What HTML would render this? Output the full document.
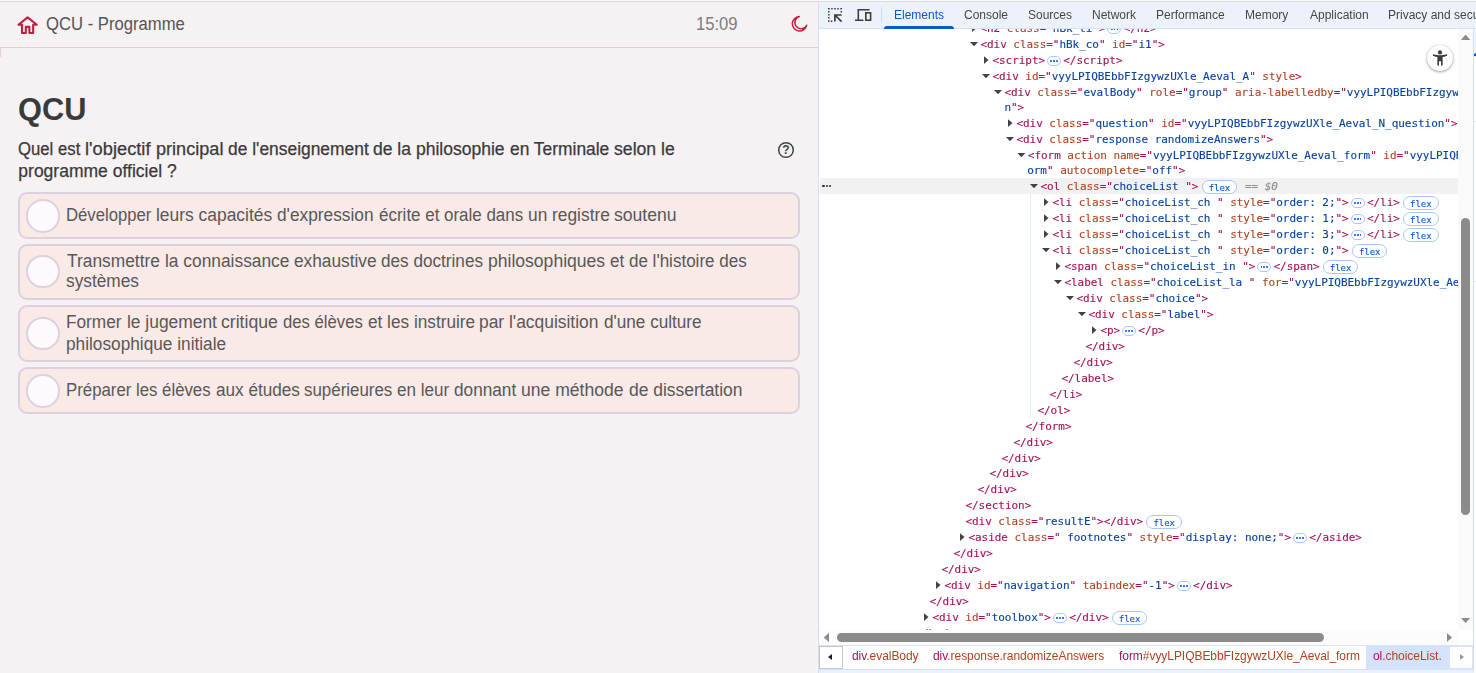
<!DOCTYPE html>
<html lang="fr">
<head>
<meta charset="utf-8">
<title>QCU - Programme</title>
<style>
*{box-sizing:border-box;margin:0;padding:0}
html,body{width:1476px;height:673px;overflow:hidden;background:#f6f1f3}
.sx{transform-origin:0 0}
.ln{display:block;transform-origin:0 0}
body{position:relative;font-family:"Liberation Sans",sans-serif;color:#3b3b3b}
#topline{position:absolute;left:0;top:0;width:1476px;height:2px;background:linear-gradient(#fbfbfb 0,#fbfbfb 1px,#dadada 1px,#dadada 2px);z-index:50}
/* ---------- left page ---------- */
#page{position:absolute;left:0;top:0;width:818px;height:673px;background:#f6f1f3;overflow:hidden}
#hdr{position:absolute;left:0;top:0;width:818px;height:48px;border-bottom:1px solid #dfd0dc}
#stub{position:absolute;left:0;top:48px;width:1px;height:9px;background:#dfd0dc}
#home{position:absolute;left:14.9px;top:13.2px;width:25.2px;height:25.2px}
#ttl{position:absolute;left:46px;top:12px;font-size:18px;line-height:24px;color:#555;white-space:nowrap}
#clock{position:absolute;left:696px;top:12px;font-size:18px;line-height:24px;color:#7d7d7d;white-space:nowrap}
#moon{position:absolute;left:786px;top:12px;width:26px;height:26px}
h1{position:absolute;left:18px;top:90px;font-size:32px;line-height:38px;font-weight:bold;color:#3a3a3a;white-space:nowrap}
#q{position:absolute;left:18.3px;top:137.5px;font-size:17.5px;line-height:22px;color:#3a3a3a;white-space:nowrap;letter-spacing:.01px;-webkit-text-stroke:.25px #3a3a3a}
#help{position:absolute;left:777px;top:141px;width:18px;height:18px}
.opt{position:absolute;left:18px;width:782px;border:2px solid #ddd1de;border-radius:9px;background:#f9e9e7}
.opt .rad{position:absolute;left:6.2px;width:33.6px;height:33.6px;margin-top:.2px;border-radius:50%;border:2px solid #ddd1de;background:#fdf9fc}
.lw{position:absolute;left:0;display:block;white-space:pre}
.lw .w{position:absolute;top:0;transform-origin:0 0;white-space:pre}
#q .l2{position:absolute;left:0;top:22px}
.opt .lw{font-size:18px;line-height:20px;color:#585858}
.opt .ln{position:absolute;left:46.2px;font-size:18px;line-height:20px;color:#585858;white-space:nowrap}
/* ---------- devtools ---------- */
#dt{position:absolute;left:818px;top:0;width:658px;height:673px;background:#fff;overflow:hidden}
#dt .abs,#dt>div,#tb>*,#bc>*{position:absolute}
#lb{left:0;top:0;width:1px;height:673px;background:#cfdff7;z-index:40}
#tb{left:1px;top:2px;width:657px;height:27px;background:#edf2fa;border-bottom:1px solid #d3e3fd;z-index:10}
#tb span{will-change:transform;top:6px;font-size:12px;line-height:15px;color:#454746;white-space:nowrap}
#tb span.on{color:#0b57d0}
#tb .ul{left:65px;top:23.5px;width:70px;height:3px;background:#0b57d0;border-radius:3px 3px 0 0}
#tb .sep{left:62px;top:5px;width:1px;height:16px;background:#cbdcf6}
#tb svg{left:0;top:0}
#code{left:1px;top:29px;width:639px;height:601px;overflow:hidden;background:#fff}
#rows{will-change:transform;position:absolute;left:-819px;top:-29px;width:1500px;height:673px;font-family:"DejaVu Sans Mono","Liberation Mono",monospace;font-size:11px;letter-spacing:-0.04px}
.row{position:absolute;left:819px;width:700px;height:16px;line-height:16px;white-space:pre}
.row.sel{background:linear-gradient(90deg,#fff 1px,#f1f1f1 1px)}
.code{position:absolute;top:1px;white-space:pre;color:#a3125b;-webkit-text-stroke:.12px}
.t{color:#a3125b}
.a{color:#ae4420}
.v{color:#0842a0}
.eq{color:#8f8f8f;font-style:italic}
.ad,.ar{position:absolute;background:#434343}
.ad{top:6px;width:8px;height:4.2px;clip-path:polygon(0 0,100% 0,50% 100%)}
.ar{top:4.2px;width:4.5px;height:7.8px;clip-path:polygon(0 0,100% 50%,0 100%)}
.ell{display:inline-block;vertical-align:top;position:relative;width:14px;height:9.8px;margin:3.1px 2.3px 0 1.9px;border:1px solid #a8c7fa;border-radius:5px;background:#fff}
.ell i,.gut i{position:absolute;width:1.8px;height:1.8px;border-radius:50%;background:#0b57d0;top:3.1px}
.ell i:nth-child(1){left:2.3px}.ell i:nth-child(2){left:5.2px}.ell i:nth-child(3){left:8.1px}
.gut{position:absolute;left:3.3px;top:6.7px;width:10px;height:3px}
.gut i{background:#2e2e2e;top:0;width:2.3px;height:2.3px}
.gut i:nth-child(1){left:0}.gut i:nth-child(2){left:3.4px}.gut i:nth-child(3){left:6.8px}
.flex{display:inline-block;vertical-align:top;height:13.8px;line-height:14.2px;margin:1.4px 1.2px 0 3.2px;padding:0 6px;border:1px solid #a8c7fa;border-radius:7px;background:#fff;color:#0b57d0;font-size:9px}
#guide{left:212px;top:194px;width:1px;height:224px;background:#e2ecfc;z-index:5}
#vs{left:640px;top:29px;width:15px;height:616px;background:#fafafa}
#vs .th{position:absolute;left:3.3px;top:189px;width:8.5px;height:297px;border-radius:4.5px;background:#8b8b8b}
#vs .up,#vs .dn,#hs .lf,#hs .rt{position:absolute;background:#8b8b8b}
#vs .up{left:2.9px;top:5.6px;width:9.4px;height:5.3px;clip-path:polygon(50% 0,100% 100%,0 100%)}
#vs .dn{left:2.9px;top:588.8px;width:9.4px;height:5.3px;clip-path:polygon(0 0,100% 0,50% 100%)}
#hs{left:1px;top:630px;width:639px;height:15px;background:#fcfcfc}
#hs .th{position:absolute;left:18px;top:3.2px;width:487px;height:8.6px;border-radius:4.5px;background:#8b8b8b}
#hs .lf{left:4.8px;top:2.8px;width:5.4px;height:9.4px;clip-path:polygon(100% 0,100% 100%,0 50%)}
#hs .rt{left:627.6px;top:2.8px;width:5.4px;height:9.4px;clip-path:polygon(0 0,100% 50%,0 100%)}
#corner{left:640px;top:630px;width:15px;height:15px;background:#fff}
#rb{left:655px;top:29px;width:1px;height:644px;background:#cfdff7}
#rp{left:656px;top:29px;width:2px;height:644px;background:#fff}
#rp i{position:absolute;left:0;width:2px;display:block}
#bc{left:1px;top:645px;width:654px;height:25px;background:#fff;border-top:1px solid #d3e3fd;border-bottom:1px solid #d3e3fd;font-size:12px;line-height:20px;white-space:nowrap}
#bc .c{will-change:transform;top:0;height:23px;padding:0 7px;color:#ae4420;letter-spacing:-0.05px}
#bc .c b{font-weight:normal;color:#a3125b}
#bc .onbg{top:0;height:23px;background:#d3e3fd}
#bc .btn{top:0;width:24px;height:23px;background:#fff;border:1px solid #c4c7c5}
#bc .btn.dis{border-color:#e1e6ee}
#bc .btn i{position:absolute;width:0;height:0;top:6.8px;border-top:3px solid transparent;border-bottom:3px solid transparent}
#foot{left:0;top:670px;width:656px;height:3px;background:#eaf1fb}
#a11y{left:609px;top:44.5px;width:26px;height:26px;border-radius:50%;background:#fff;box-shadow:0 1px 3px rgba(0,0,0,.35),0 0 1px rgba(0,0,0,.25);z-index:20}
#a11y svg{position:absolute;left:4px;top:4px;width:18px;height:18px}
</style>
</head>
<body>
<div id="page">
  <div id="hdr"></div><div id="stub"></div>
  <svg id="home" viewBox="0 0 24 24"><path fill="none" stroke="#c21f41" stroke-width="2" stroke-linejoin="round" d="M12 4.2L3.3 11.2H6.7V19H10.3V13.2H13.7V19H17.3V11.2H20.7Z"/></svg>
  <div id="ttl" class="sx" style="transform:scaleX(.925)">QCU - Programme</div>
  <div id="clock" class="sx" style="transform:scaleX(.923)">15:09</div>
  <svg id="moon" viewBox="786 12 26 26"><path fill="none" stroke="#c21f41" stroke-width="1.5" stroke-linejoin="round" d="M799.3 16.6A7.25 7.25 0 1 0 806.7 25.2A6.2 6.2 0 1 1 799.3 16.6z"/></svg>
  <h1 class="sx" style="transform:scaleX(.961)">QCU</h1>
  <div id="q"><span class="lw" style="top:0"><span class="w" style="left:0.20px;transform:scaleX(0.9545)">Quel est </span><span class="w" style="left:66.96px;transform:scaleX(1.0438)">l'objectif </span><span class="w" style="left:137.47px;transform:scaleX(1.0328)">principal </span><span class="w" style="left:209.80px;transform:scaleX(0.9935)">de l'enseignement </span><span class="w" style="left:355.20px;transform:scaleX(1.0006)">de la philosophie </span><span class="w" style="left:491.50px;transform:scaleX(0.9928)">en Terminale </span><span class="w" style="left:595.80px;transform:scaleX(1.0069)">selon le</span></span><span class="l2">programme officiel ?</span></div>
  <svg id="help" viewBox="0 0 18 18"><circle cx="9" cy="9" r="7.3" fill="none" stroke="#444" stroke-width="1.5"/><text x="9" y="13.3" text-anchor="middle" font-family="Liberation Sans, sans-serif" font-weight="bold" font-size="12" fill="#444">?</text></svg>
  <div class="opt" style="top:192px;height:47px"><div class="rad" style="top:5px"></div><span class="lw" style="top:10.86px"><span class="w" style="left:46.27px;transform:scaleX(0.9273)">Développer </span><span class="w" style="left:136.23px;transform:scaleX(0.9673)">leurs capacités </span><span class="w" style="left:257.20px;transform:scaleX(0.9602)">d'expression </span><span class="w" style="left:358.50px;transform:scaleX(0.9445)">écrite et </span><span class="w" style="left:423.70px;transform:scaleX(0.9416)">orale dans </span><span class="w" style="left:507.54px;transform:scaleX(0.9624)">un registre </span><span class="w" style="left:594.20px;transform:scaleX(0.9771)">soutenu</span></span></div>
  <div class="opt" style="top:244px;height:56px"><div class="rad" style="top:8.6px"></div><span class="lw" style="top:4.76px"><span class="w" style="left:46.80px;transform:scaleX(0.9643)">Transmettre </span><span class="w" style="left:144.54px;transform:scaleX(0.964)">la connaissance </span><span class="w" style="left:273.80px;transform:scaleX(0.9599)">exhaustive </span><span class="w" style="left:361.20px;transform:scaleX(0.9526)">des doctrines </span><span class="w" style="left:467.92px;transform:scaleX(0.9751)">philosophiques </span><span class="w" style="left:589.90px;transform:scaleX(0.9459)">et de l'histoire des</span></span><span class="ln" style="top:25.46px;transform:scaleX(0.9605)">systèmes</span></div>
  <div class="opt" style="top:305px;height:57px"><div class="rad" style="top:9.6px"></div><span class="lw" style="top:5.06px"><span class="w" style="left:46.24px;transform:scaleX(0.9571)">Former </span><span class="w" style="left:106.53px;transform:scaleX(0.9664)">le jugement </span><span class="w" style="left:201.30px;transform:scaleX(0.979)">critique </span><span class="w" style="left:263.00px;transform:scaleX(0.928)">des élèves </span><span class="w" style="left:347.50px;transform:scaleX(0.9556)">et les instruire </span><span class="w" style="left:459.33px;transform:scaleX(0.967)">par l'acquisition </span><span class="w" style="left:583.60px;transform:scaleX(0.9522)">d'une culture</span></span><span class="ln" style="top:26.76px;transform:scaleX(0.958)">philosophique initiale</span></div>
  <div class="opt" style="top:367px;height:47px"><div class="rad" style="top:5px"></div><span class="lw" style="top:10.96px"><span class="w" style="left:46.27px;transform:scaleX(0.9329)">Préparer </span><span class="w" style="left:116.27px;transform:scaleX(0.9317)">les élèves </span><span class="w" style="left:195.50px;transform:scaleX(0.9531)">aux études </span><span class="w" style="left:284.20px;transform:scaleX(0.9389)">supérieures </span><span class="w" style="left:377.20px;transform:scaleX(0.9494)">en leur </span><span class="w" style="left:434.20px;transform:scaleX(0.9554)">donnant </span><span class="w" style="left:501.12px;transform:scaleX(0.9754)">une méthode </span><span class="w" style="left:608.50px;transform:scaleX(0.9693)">de dissertation</span></span></div>
</div>
<div id="dt">
  <div id="lb"></div>
  <div id="tb">
    <svg width="70" height="27" viewBox="819 2 70 27">
      <g fill="none" stroke="#3c3c3c" stroke-width="1.5">
        <path d="M841.3 12.4V8.8H828.8V21.2H833" stroke-dasharray="1.5 1.55"/>
        <path d="M841.6 21.7L835.4 15.5M834.9 21.6V15H841.6" stroke-width="1.7"/>
        <path d="M869.5 9.8H858.3V20M855 20.3H863.4" stroke-width="1.6"/>
        <rect x="865.8" y="12.8" width="4.8" height="7.4" stroke-width="1.6"/>
      </g>
    </svg>
    <div class="sep"></div>
    <span class="on" style="left:75.2px">Elements</span>
    <span style="left:144.9px">Console</span>
    <span style="left:209.1px">Sources</span>
    <span style="left:273.2px">Network</span>
    <span style="left:337.4px">Performance</span>
    <span style="left:426.4px">Memory</span>
    <span style="left:491px">Application</span>
    <span style="left:569.3px">Privacy and security</span>
    <div class="ul"></div>
  </div>
  <div id="code"><div id="rows">
<div class="row " style="top:20.00px"><b class="ar" style="left:153.0px"></b><span class="code" style="left:161.4px"><span class="t">&lt;h2</span> <span class="a">class</span><span class="t">="</span><span class="v">hBk_ti</span><span class="t">"</span><span class="t">&gt;</span><span class="ell"><i></i><i></i><i></i></span><span class="t">&lt;/h2&gt;</span></span></div>
<div class="row " style="top:36.00px"><b class="ad" style="left:151.0px"></b><span class="code" style="left:161.4px"><span class="t">&lt;div</span> <span class="a">class</span><span class="t">="</span><span class="v">hBk_co</span><span class="t">"</span> <span class="a">id</span><span class="t">="</span><span class="v">i1</span><span class="t">"</span><span class="t">&gt;</span></span></div>
<div class="row " style="top:52.00px"><b class="ar" style="left:165.0px"></b><span class="code" style="left:173.4px"><span class="t">&lt;script&gt;</span><span class="ell"><i></i><i></i><i></i></span><span class="t">&lt;/script&gt;</span></span></div>
<div class="row " style="top:68.00px"><b class="ad" style="left:163.0px"></b><span class="code" style="left:173.4px"><span class="t">&lt;div</span> <span class="a">id</span><span class="t">="</span><span class="v">vyyLPIQBEbbFIzgywzUXle_Aeval_A</span><span class="t">"</span> <span class="a">style</span><span class="t">&gt;</span></span></div>
<div class="row " style="top:84.00px"><b class="ad" style="left:175.0px"></b><span class="code" style="left:185.4px"><span class="t">&lt;div</span> <span class="a">class</span><span class="t">="</span><span class="v">evalBody</span><span class="t">"</span> <span class="a">role</span><span class="t">="</span><span class="v">group</span><span class="t">"</span> <span class="a">aria-labelledby</span><span class="t">="</span><span class="v">vyyLPIQBEbbFIzgywzUXle_Aeval_N_questio</span><span class="t">"</span></span></div>
<div class="row " style="top:99.00px"><span class="code" style="left:185.4px"><span class="v">n</span><span class="t">"</span><span class="t">&gt;</span></span></div>
<div class="row " style="top:115.00px"><b class="ar" style="left:189.0px"></b><span class="code" style="left:197.4px"><span class="t">&lt;div</span> <span class="a">class</span><span class="t">="</span><span class="v">question</span><span class="t">"</span> <span class="a">id</span><span class="t">="</span><span class="v">vyyLPIQBEbbFIzgywzUXle_Aeval_N_question</span><span class="t">"</span><span class="t">&gt;</span></span></div>
<div class="row " style="top:131.00px"><b class="ad" style="left:187.0px"></b><span class="code" style="left:197.4px"><span class="t">&lt;div</span> <span class="a">class</span><span class="t">="</span><span class="v">response randomizeAnswers</span><span class="t">"</span><span class="t">&gt;</span></span></div>
<div class="row " style="top:147.00px"><b class="ad" style="left:198.4px"></b><span class="code" style="left:208.8px"><span class="t">&lt;form</span> <span class="a">action</span> <span class="a">name</span><span class="t">="</span><span class="v">vyyLPIQBEbbFIzgywzUXle_Aeval_form</span><span class="t">"</span> <span class="a">id</span><span class="t">="</span><span class="v">vyyLPIQBEbbFIzgywzUXle_Aeval_f</span></span></div>
<div class="row " style="top:162.00px"><span class="code" style="left:208.2px"><span class="v">orm</span><span class="t">"</span> <span class="a">autocomplete</span><span class="t">="</span><span class="v">off</span><span class="t">"</span><span class="t">&gt;</span></span></div>
<div class="row sel" style="top:178.00px"><span class="gut"><i></i><i></i><i></i></span><b class="ad" style="left:211.0px"></b><span class="code" style="left:221.4px"><span class="t">&lt;ol</span> <span class="a">class</span><span class="t">="</span><span class="v">choiceList </span><span class="t">"</span><span class="t">&gt;</span><span class="flex">flex</span><span class="eq"> == $0</span></span></div>
<div class="row " style="top:194.00px"><b class="ar" style="left:225.0px"></b><span class="code" style="left:233.4px"><span class="t">&lt;li</span> <span class="a">class</span><span class="t">="</span><span class="v">choiceList_ch </span><span class="t">"</span> <span class="a">style</span><span class="t">="</span><span class="v">order: 2;</span><span class="t">"</span><span class="t">&gt;</span><span class="ell"><i></i><i></i><i></i></span><span class="t">&lt;/li&gt;</span><span class="flex">flex</span></span></div>
<div class="row " style="top:210.00px"><b class="ar" style="left:225.0px"></b><span class="code" style="left:233.4px"><span class="t">&lt;li</span> <span class="a">class</span><span class="t">="</span><span class="v">choiceList_ch </span><span class="t">"</span> <span class="a">style</span><span class="t">="</span><span class="v">order: 1;</span><span class="t">"</span><span class="t">&gt;</span><span class="ell"><i></i><i></i><i></i></span><span class="t">&lt;/li&gt;</span><span class="flex">flex</span></span></div>
<div class="row " style="top:226.00px"><b class="ar" style="left:225.0px"></b><span class="code" style="left:233.4px"><span class="t">&lt;li</span> <span class="a">class</span><span class="t">="</span><span class="v">choiceList_ch </span><span class="t">"</span> <span class="a">style</span><span class="t">="</span><span class="v">order: 3;</span><span class="t">"</span><span class="t">&gt;</span><span class="ell"><i></i><i></i><i></i></span><span class="t">&lt;/li&gt;</span><span class="flex">flex</span></span></div>
<div class="row " style="top:242.00px"><b class="ad" style="left:223.0px"></b><span class="code" style="left:233.4px"><span class="t">&lt;li</span> <span class="a">class</span><span class="t">="</span><span class="v">choiceList_ch </span><span class="t">"</span> <span class="a">style</span><span class="t">="</span><span class="v">order: 0;</span><span class="t">"</span><span class="t">&gt;</span><span class="flex">flex</span></span></div>
<div class="row " style="top:258.00px"><b class="ar" style="left:237.0px"></b><span class="code" style="left:245.4px"><span class="t">&lt;span</span> <span class="a">class</span><span class="t">="</span><span class="v">choiceList_in </span><span class="t">"</span><span class="t">&gt;</span><span class="ell"><i></i><i></i><i></i></span><span class="t">&lt;/span&gt;</span><span class="flex">flex</span></span></div>
<div class="row " style="top:274.00px"><b class="ad" style="left:235.0px"></b><span class="code" style="left:245.4px"><span class="t">&lt;label</span> <span class="a">class</span><span class="t">="</span><span class="v">choiceList_la </span><span class="t">"</span> <span class="a">for</span><span class="t">="</span><span class="v">vyyLPIQBEbbFIzgywzUXle_Aeval_N_0</span><span class="t">"</span></span></div>
<div class="row " style="top:290.00px"><b class="ad" style="left:247.0px"></b><span class="code" style="left:257.4px"><span class="t">&lt;div</span> <span class="a">class</span><span class="t">="</span><span class="v">choice</span><span class="t">"</span><span class="t">&gt;</span></span></div>
<div class="row " style="top:306.00px"><b class="ad" style="left:259.0px"></b><span class="code" style="left:269.4px"><span class="t">&lt;div</span> <span class="a">class</span><span class="t">="</span><span class="v">label</span><span class="t">"</span><span class="t">&gt;</span></span></div>
<div class="row " style="top:322.00px"><b class="ar" style="left:273.0px"></b><span class="code" style="left:281.4px"><span class="t">&lt;p&gt;</span><span class="ell"><i></i><i></i><i></i></span><span class="t">&lt;/p&gt;</span></span></div>
<div class="row " style="top:338.00px"><span class="code" style="left:266.4px"><span class="t">&lt;/div&gt;</span></span></div>
<div class="row " style="top:354.00px"><span class="code" style="left:254.4px"><span class="t">&lt;/div&gt;</span></span></div>
<div class="row " style="top:370.00px"><span class="code" style="left:242.4px"><span class="t">&lt;/label&gt;</span></span></div>
<div class="row " style="top:386.00px"><span class="code" style="left:230.4px"><span class="t">&lt;/li&gt;</span></span></div>
<div class="row " style="top:402.00px"><span class="code" style="left:218.4px"><span class="t">&lt;/ol&gt;</span></span></div>
<div class="row " style="top:418.00px"><span class="code" style="left:206.4px"><span class="t">&lt;/form&gt;</span></span></div>
<div class="row " style="top:434.00px"><span class="code" style="left:194.4px"><span class="t">&lt;/div&gt;</span></span></div>
<div class="row " style="top:450.00px"><span class="code" style="left:182.4px"><span class="t">&lt;/div&gt;</span></span></div>
<div class="row " style="top:465.00px"><span class="code" style="left:170.4px"><span class="t">&lt;/div&gt;</span></span></div>
<div class="row " style="top:481.00px"><span class="code" style="left:158.4px"><span class="t">&lt;/div&gt;</span></span></div>
<div class="row " style="top:497.00px"><span class="code" style="left:146.4px"><span class="t">&lt;/section&gt;</span></span></div>
<div class="row " style="top:513.00px"><span class="code" style="left:146.4px"><span class="t">&lt;div</span> <span class="a">class</span><span class="t">="</span><span class="v">resultE</span><span class="t">"</span><span class="t">&gt;</span><span class="t">&lt;/div&gt;</span><span class="flex">flex</span></span></div>
<div class="row " style="top:529.00px"><b class="ar" style="left:141.0px"></b><span class="code" style="left:149.4px"><span class="t">&lt;aside</span> <span class="a">class</span><span class="t">="</span><span class="v"> footnotes</span><span class="t">"</span> <span class="a">style</span><span class="t">="</span><span class="v">display: none;</span><span class="t">"</span><span class="t">&gt;</span><span class="ell"><i></i><i></i><i></i></span><span class="t">&lt;/aside&gt;</span></span></div>
<div class="row " style="top:545.00px"><span class="code" style="left:134.4px"><span class="t">&lt;/div&gt;</span></span></div>
<div class="row " style="top:561.00px"><span class="code" style="left:122.4px"><span class="t">&lt;/div&gt;</span></span></div>
<div class="row " style="top:577.00px"><b class="ar" style="left:117.0px"></b><span class="code" style="left:125.4px"><span class="t">&lt;div</span> <span class="a">id</span><span class="t">="</span><span class="v">navigation</span><span class="t">"</span> <span class="a">tabindex</span><span class="t">="</span><span class="v">-1</span><span class="t">"</span><span class="t">&gt;</span><span class="ell"><i></i><i></i><i></i></span><span class="t">&lt;/div&gt;</span></span></div>
<div class="row " style="top:593.00px"><span class="code" style="left:110.4px"><span class="t">&lt;/div&gt;</span></span></div>
<div class="row " style="top:609.00px"><b class="ar" style="left:105.0px"></b><span class="code" style="left:113.4px"><span class="t">&lt;div</span> <span class="a">id</span><span class="t">="</span><span class="v">toolbox</span><span class="t">"</span><span class="t">&gt;</span><span class="ell"><i></i><i></i><i></i></span><span class="t">&lt;/div&gt;</span><span class="flex">flex</span></span></div>
<div class="row " style="top:625.00px"><span class="code" style="left:96.4px"><span class="t">&lt;/body&gt;</span></span></div>
  </div></div>
  <div id="guide"></div>
  <div id="vs"><b class="up"></b><div class="th"></div><b class="dn"></b></div>
  <div id="hs"><b class="lf"></b><div class="th"></div><b class="rt"></b></div>
  <div id="corner"></div>
  <div id="rb"></div><div id="rp"><i style="top:0;height:24px;background:#f1f5fc"></i><i style="top:24px;height:3px;background:#0b57d0;border-radius:2px 0 0 0"></i><i style="top:27px;height:1px;background:#d3e3fd"></i><i style="top:92px;height:1px;background:#d3e3fd"></i><i style="top:252px;height:1px;background:#d3e3fd"></i></div>
  <div id="a11y"><svg viewBox="0 0 24 24"><g fill="#3c3c3c"><circle cx="12" cy="4.5" r="2.7"/><path d="M2.8 6.9Q12 9.9 21.2 6.9L21.6 8.9Q17 10.4 15.5 10.6V22H13.3V16.2H10.7V22H8.5V10.6Q7 10.4 2.4 8.9Z"/></g></svg></div>
  <div id="bc">
    <div class="btn" style="left:0"><i style="left:8px;border-right:4px solid #1f1f1f"></i></div>
    <div class="c" style="left:26px"><b>div</b>.evalBody</div>
    <div class="c" style="left:106.5px"><b>div</b>.response.randomizeAnswers</div>
    <div class="c" style="left:292.5px"><b>form</b>#vyyLPIQBEbbFIzgywzUXle_Aeval_form</div>
    <div class="onbg" style="left:547px;width:83.5px"></div>
    <div class="c" style="left:547px"><b>ol</b>.choiceList.</div>
    <div class="btn dis" style="left:630px"><i style="left:9.5px;border-left:4.5px solid #9a9a9a"></i></div>
  </div>
  <div id="foot"></div>
</div>
<div id="topline"></div>
</body>
</html>
